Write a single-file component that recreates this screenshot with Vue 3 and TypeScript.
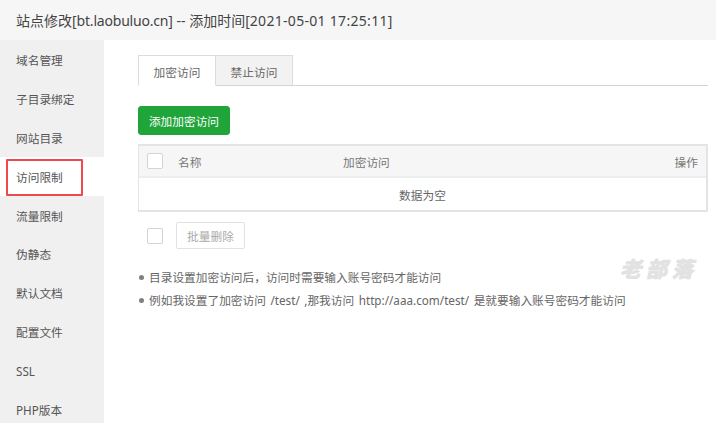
<script setup lang="ts">
const menu: string[] = ['域名管理', '子目录绑定', '网站目录', '访问限制', '流量限制', '伪静态', '默认文档', '配置文件', 'SSL', 'PHP版本']
const activeItem = '访问限制'
const notes: string[] = [
  '目录设置加密访问后，访问时需要输入账号密码才能访问',
  '例如我设置了加密访问 /test/ ,那我访问 http://aaa.com/test/ 是就要输入账号密码才能访问',
]
</script>

<template>
  <div class="page">
    <header class="title">站点修改[<span class="host">bt.laobuluo.cn</span>] -- 添加时间[<span class="date">2021-05-01 17:25:11</span>]</header>
    <div class="body">
      <aside class="side">
        <div v-for="m in menu" :key="m" class="item" :class="{ active: m === activeItem }">
          {{ m }}
          <span v-if="m === activeItem" class="mark"></span>
        </div>
      </aside>
      <main class="main">
        <div class="tabs">
          <div class="tab on">加密访问</div>
          <div class="tab">禁止访问</div>
        </div>
        <button class="add">添加加密访问</button>
        <div class="table">
          <div class="thead">
            <span class="check"></span>
            <span class="c-name">名称</span>
            <span class="c-auth">加密访问</span>
            <span class="c-op">操作</span>
          </div>
          <div class="empty">数据为空</div>
        </div>
        <div class="batch">
          <span class="check"></span>
          <button class="del">批量删除</button>
        </div>
        <ul class="notes">
          <li v-for="n in notes" :key="n">{{ n }}</li>
        </ul>
        <div class="wm">老部落</div>
      </main>
    </div>
  </div>
</template>

<style scoped>
.page {
  width: 716px;
  height: 423px;
  overflow: hidden;
  background: #fff;
  color: #555;
  font-family: "Noto Sans", "Noto Sans CJK SC", sans-serif;
  font-size: 11.7px;
  display: flex;
  flex-direction: column;
}
.title {
  height: 40px;
  flex: none;
  box-sizing: border-box;
  padding-left: 16px;
  line-height: 41px;
  font-size: 14px;
  color: #444;
  background: #f6f6f6;
  white-space: nowrap;
}
.host {
  letter-spacing: -0.2px;
}
.date {
  letter-spacing: 0.3px;
}
.body {
  flex: 1;
  display: flex;
  min-height: 0;
}
.side {
  width: 104px;
  flex: none;
  background: #f0f0f0;
}
.item {
  position: relative;
  height: 38.9px;
  line-height: 41px;
  padding-left: 16px;
  color: #555;
}
.item.active {
  background: #fff;
}
.mark {
  position: absolute;
  left: 6px;
  top: 2px;
  width: 77px;
  height: 37px;
  box-sizing: border-box;
  border: 2px solid #f0484e;
  border-radius: 1px;
}
.main {
  position: relative;
  flex: 1;
  padding: 15px 8px 0 34px;
}
.tabs {
  display: flex;
  height: 31px;
  box-sizing: border-box;
  border-bottom: 1px solid #d4d4d8;
}
.tab {
  width: 77px;
  height: 31px;
  box-sizing: border-box;
  line-height: 33px;
  text-align: center;
  background: #f2f2f2;
  border: 1px solid #dcdce0;
  border-bottom: 1px solid #d4d4d8;
  border-left: 0;
  color: #666;
}
.tab.on {
  width: 78px;
  background: #fff;
  border-left: 1px solid #dcdce0;
  border-right: 1px solid #dcdce0;
  border-bottom-color: #fff;
}
.add {
  display: block;
  margin-top: 20px;
  width: 92px;
  height: 29px;
  padding: 0;
  border: 1px solid #20a53a;
  border-radius: 3px;
  background: #20a53a;
  color: #fff;
  font: inherit;
}
.table {
  margin-top: 9px;
  height: 68px;
  box-sizing: border-box;
  border: 1px solid #e4e4e4;
  border-top-width: 2px;
  border-right-width: 2px;
  border-bottom-width: 2px;
}
.thead {
  display: flex;
  align-items: center;
  box-sizing: border-box;
  height: 32px;
  padding-left: 8px;
  background: #f6f6f6;
  border-bottom: 2px solid #eceff0;
  color: #777;
}
.check {
  width: 16px;
  height: 16px;
  flex: none;
  box-sizing: border-box;
  background: #fff;
  border: 1px solid #d4d4d4;
  border-radius: 2px;
}
.c-name {
  margin-left: 15px;
  width: 165px;
}
.c-auth {
  flex: 1;
}
.c-op {
  padding-right: 8px;
}
.empty {
  height: 32px;
  line-height: 35px;
  text-align: center;
  color: #666;
}
.batch {
  display: flex;
  align-items: center;
  margin-top: 10px;
  padding-left: 9px;
  height: 27px;
}
.del {
  margin-left: 13px;
  width: 69px;
  height: 27px;
  padding: 0;
  font: inherit;
  color: #aaa;
  background: #fff;
  border: 1px solid #e2e2e2;
  border-radius: 2px;
}
.notes {
  list-style: none;
  margin: 16px 0 0;
  padding: 0;
}
.notes li {
  position: relative;
  height: 23px;
  line-height: 24px;
  padding-left: 11px;
  color: #666;
  white-space: nowrap;
  word-spacing: 1.5px;
}
.notes li::before {
  content: "";
  position: absolute;
  left: 1px;
  top: 10px;
  width: 5px;
  height: 5px;
  border-radius: 50%;
  background: #808080;
}
.wm {
  position: absolute;
  left: 516px;
  top: 215px;
  font-size: 21px;
  line-height: 28px;
  font-weight: 700;
  font-style: italic;
  letter-spacing: 5px;
  color: #e2e2e2;
  -webkit-text-stroke: 1px #e2e2e2;
  white-space: nowrap;
}
</style>
